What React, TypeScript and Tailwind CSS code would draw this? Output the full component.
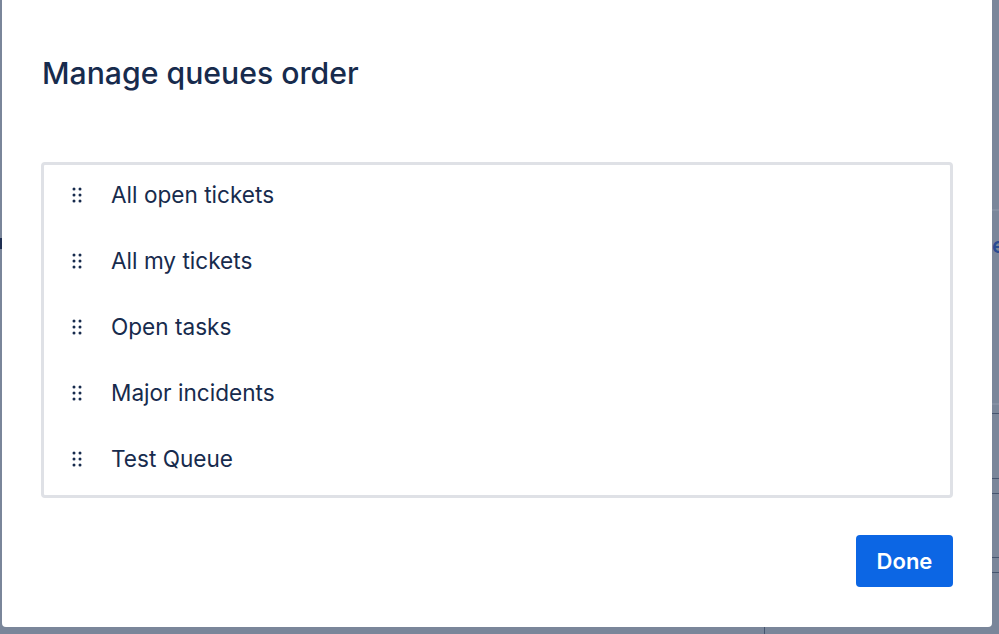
import React from 'react';

const queues = ['All open tickets', 'All my tickets', 'Open tasks', 'Major incidents', 'Test Queue'];

const DragHandle: React.FC = () => (
  <svg width="10" height="16" viewBox="0 0 10 16" className="shrink-0 text-[#172b4d]" fill="currentColor">
    <circle cx="2" cy="2" r="1.5" />
    <circle cx="8" cy="2" r="1.5" />
    <circle cx="2" cy="8" r="1.5" />
    <circle cx="8" cy="8" r="1.5" />
    <circle cx="2" cy="14" r="1.5" />
    <circle cx="8" cy="14" r="1.5" />
  </svg>
);

export default function App() {
  return (
    <div className="flex h-[634px] w-[999px] overflow-hidden bg-[#7a869a] font-['Inter','Liberation_Sans',sans-serif]">
      {/* left edge of the page behind the overlay */}
      <div className="flex w-[2px] shrink-0 flex-col pt-[238px]">
        <div className="h-[11px] bg-[#1f2f52]" />
      </div>

      <div className="flex w-[990px] shrink-0 flex-col">
        {/* modal */}
        <div className="flex h-[627px] flex-col rounded-b-[4px] bg-white px-[39px] pb-[40px]">
          <h1 className="pl-[1px] pt-[55px] text-[30.2px] font-medium leading-[36px] text-[#172b4d]">
            Manage queues order
          </h1>

          <div className="mt-[71px] rounded-[4px] border-[3px] border-[#dfe1e6]">
            {queues.map((q) => (
              <div key={q} className="flex h-[66px] items-center pb-[7px] pl-[28px]">
                <DragHandle />
                <span className="ml-[29px] text-[22.6px] leading-[28px] text-[#172b4d]">{q}</span>
              </div>
            ))}
          </div>

          <button className="mt-[37px] h-[52px] w-[97px] self-end rounded-[4px] bg-[#0c66e4] text-[22px] font-semibold text-white">
            Done
          </button>
        </div>
        <div className="flex flex-1 pl-[762px]">
          <div className="w-px bg-[#46556f]" />
        </div>
      </div>

      {/* right edge of the page behind the overlay */}
      <div className="flex w-[7px] shrink-0 flex-col overflow-hidden pt-[209px]">
        <div className="h-[2px] bg-[#8590a3]" />
        <div className="mt-[22px] h-[24px] overflow-hidden text-[22px] font-semibold leading-[24px] text-[#2a4a91]">e</div>
        <div className="mt-[146px] h-[2px] bg-[#8590a3]" />
        <div className="mt-[8px] h-px bg-[#46556f]" />
        <div className="mt-[64px] h-px bg-[#46556f]" />
        <div className="mt-[14px] h-px bg-[#46556f]" />
        <div className="mt-[63px] h-px bg-[#46556f]" />
        <div className="mt-[14px] h-px bg-[#46556f]" />
      </div>
    </div>
  );
}
